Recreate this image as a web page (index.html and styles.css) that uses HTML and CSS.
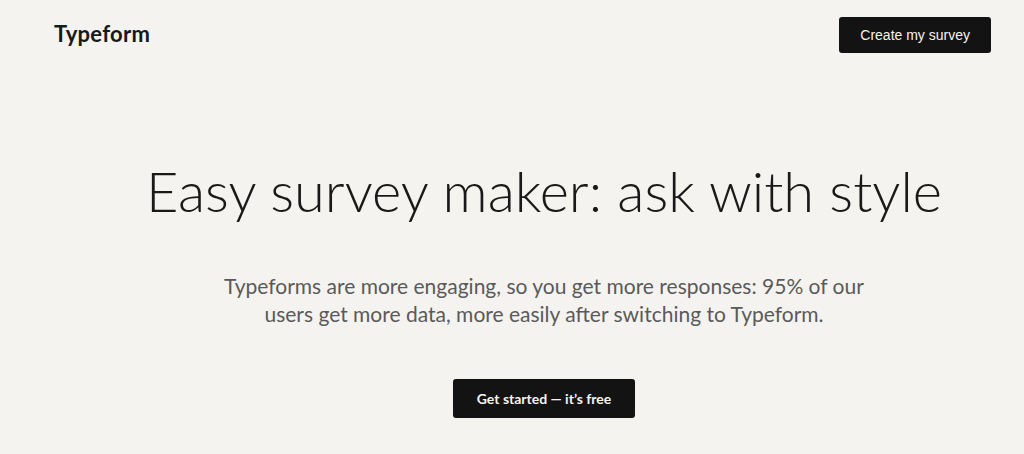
FILE: index.html
```html
<!DOCTYPE html>
<html lang="en">
<head>
<meta charset="UTF-8">
<meta name="viewport" content="width=device-width, initial-scale=1.0">
<title>Typeform</title>
<link rel="stylesheet" href="styles.css">
</head>
<body>
<header class="header">
  <div class="logo">Typeform</div>
  <a class="btn btn-small" href="#">Create my survey</a>
</header>

<main class="hero">
  <h1 class="hero-title">Easy survey maker: ask with style</h1>
  <p class="hero-text">Typeforms are more engaging, so you get more responses: 95% of our users get more data, more easily after switching to Typeform.</p>
  <a class="btn btn-large" href="#">Get started — it’s free</a>
</main>
</body>
</html>
```

FILE: styles.css
```css
body {
  font-family: Lato, "Noto Sans", sans-serif;
  background-color: #f5f3ef;
  color: #191919;
  margin: 0;
  padding: 0;
}
.header {
  display: flex;
  justify-content: space-between;
  align-items: center;
  padding: 17px 33px 0 54px;
}
.logo {
  font-size: 22px;
  font-weight: 700;
  color: #191919;
  letter-spacing: 0.3px;
  margin-top: -4px;
}
.btn {
  display: inline-block;
  background-color: #131313;
  color: #f5f3ef;
  text-decoration: none;
  border-radius: 3px;
  font-family: "Liberation Sans", Arial, sans-serif;
}
.btn-small {
  font-size: 14px;
  padding: 0 21px;
  height: 36px;
  line-height: 36px;
}
.btn-large {
  font-family: Lato, sans-serif;
  font-size: 14px;
  font-weight: 700;
  padding: 0 24px;
  height: 39px;
  line-height: 39px;
}
.hero {
  display: flex;
  flex-direction: column;
  align-items: center;
  text-align: center;
  padding: 98px 0 0 64px;
}
.hero-title {
  font-size: 56px;
  font-weight: 300;
  margin: 0;
  line-height: 80px;
  color: #191919;
}
.hero-text {
  font-size: 21px;
  font-weight: 400;
  color: #5a5a5a;
  line-height: 28px;
  max-width: 680px;
  margin: 41px 0 51px;
}
```
